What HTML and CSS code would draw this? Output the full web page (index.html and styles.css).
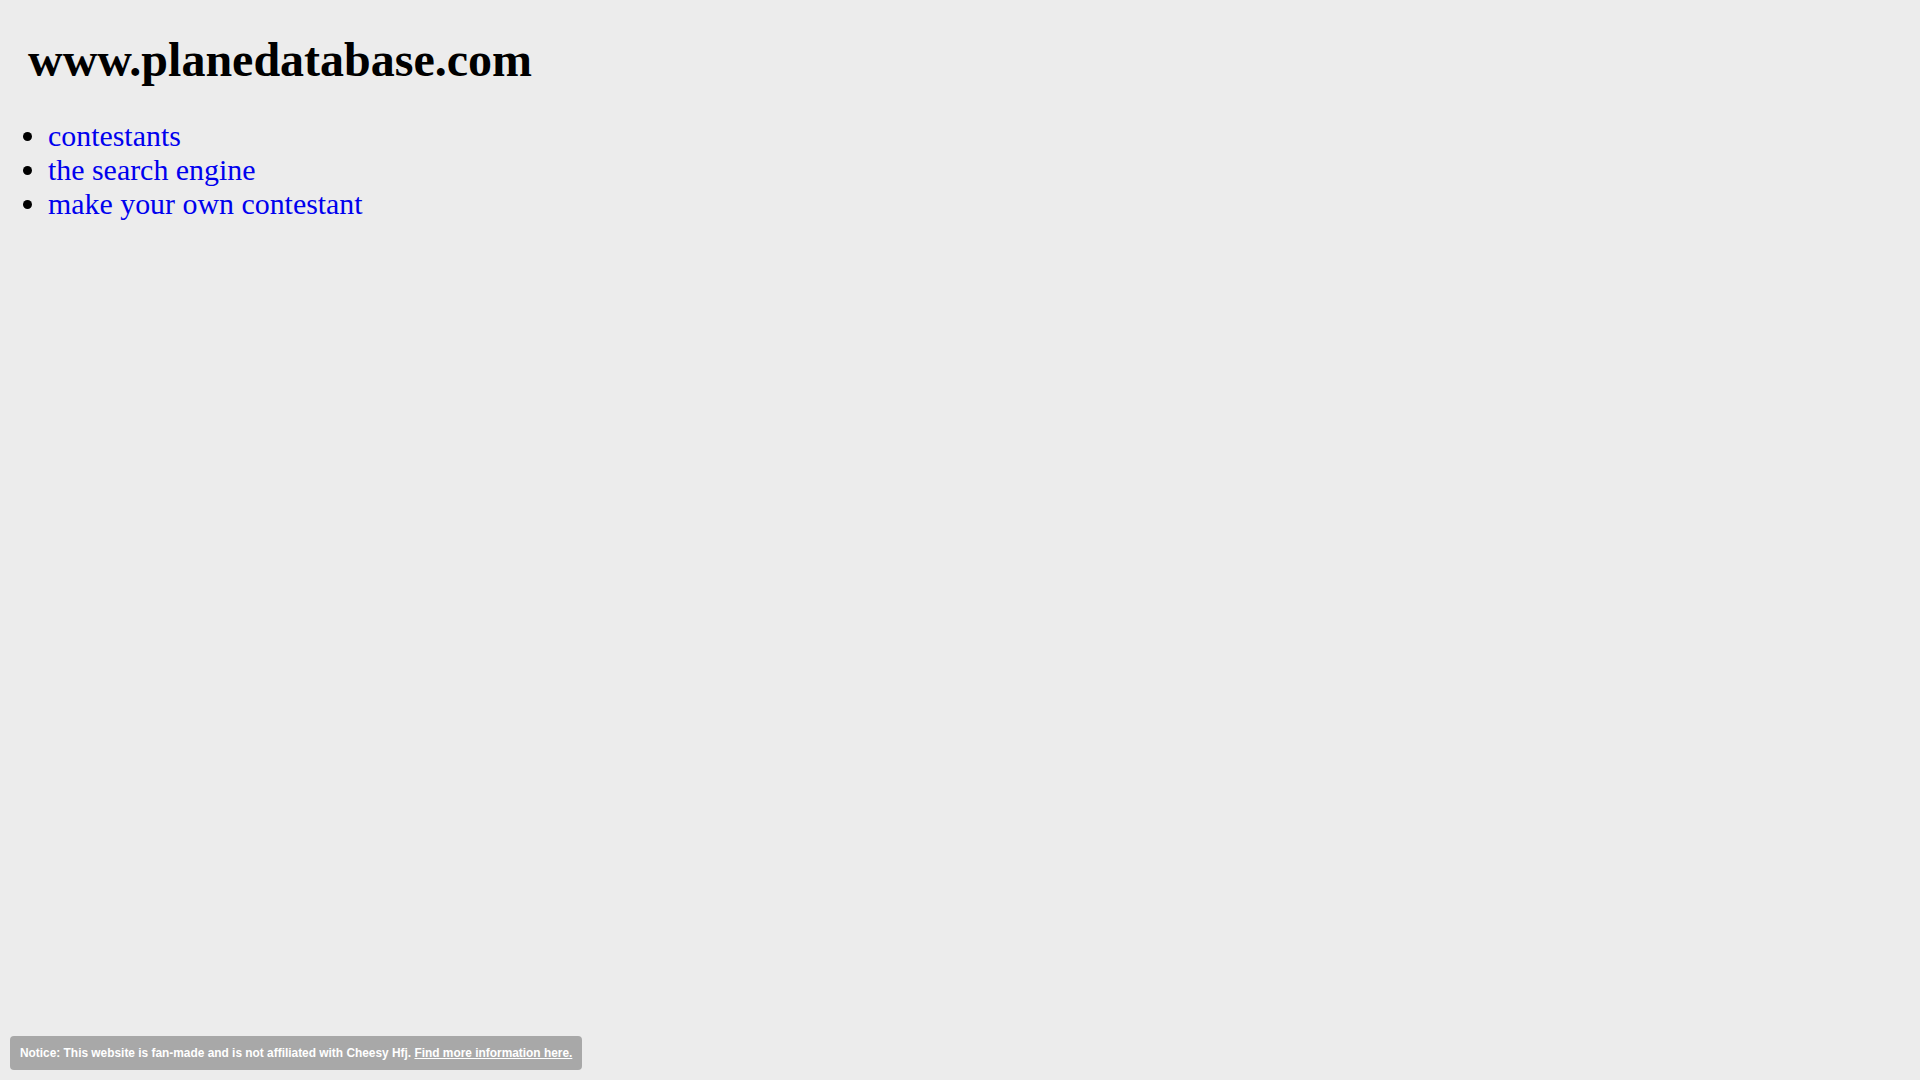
FILE: index.html
```html
<!DOCTYPE html>
<html>
<head>
<meta charset="utf-8">
<title>www.planedatabase.com</title>
<link rel="stylesheet" href="styles.css">
</head>
<body>
<h1 class="title">www.planedatabase.com</h1>
<ul class="nav">
<li><a href="#">contestants</a></li>
<li><a href="#">the search engine</a></li>
<li><a href="#">make your own contestant</a></li>
</ul>
<div class="notice">Notice: This website is fan-made and is not affiliated with Cheesy Hfj. <a href="#">Find more information here.</a></div>
</body>
</html>
```
FILE: styles.css
```css
html, body {
  background: #ececec;
}
body {
  margin: 8px;
  font-family: "Liberation Serif", "Times New Roman", serif;
  color: #000;
}
.title {
  font-size: 48px;
  font-weight: bold;
  margin: 24px 0 32px 0;
  padding-left: 20px;
}
.nav {
  margin: 0;
  padding-left: 40px;
  font-size: 29.9px;
}
.nav a {
  color: #0000ee;
  text-decoration: none;
}
.notice {
  position: fixed;
  left: 10px;
  bottom: 10px;
  background: #a8a8a8;
  color: #fff;
  font-family: "Liberation Sans", Arial, sans-serif;
  font-weight: bold;
  font-size: 11.9px;
  padding: 10px 10px;
  border-radius: 4px;
}
.notice a {
  color: #fff;
  text-decoration: underline;
}
```
